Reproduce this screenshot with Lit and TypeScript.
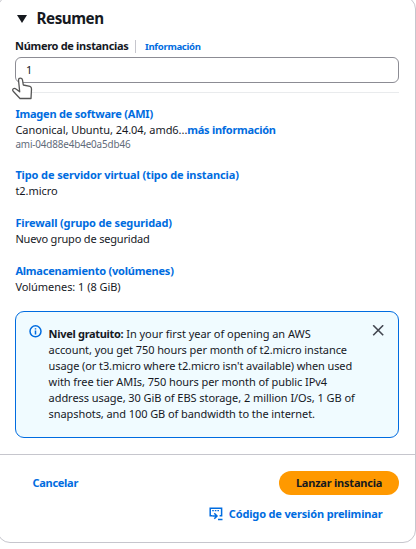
import { LitElement, html, css } from "lit";
import { customElement } from "lit/decorators.js";

@customElement("app-root")
export class AppRoot extends LitElement {
  static styles = css`
    :host {
      display: block;
      position: relative;
      height: 549px;
      overflow: hidden;
      background: #fff;
      font: 11px/16px "Noto Sans", "Open Sans", sans-serif;
      letter-spacing: -0.05px;
      color: #16191f;
    }
    * { box-sizing: border-box; }
    .card {
      margin: -4px 0 0 -3px;
      height: 547px;
      border: 1px solid #c6c6cd;
      border-radius: 13px;
      display: flex;
      flex-direction: column;
    }
    .body { height: 457px; padding: 11px 16px 0 17px; flex: none; }
    .title { display: flex; align-items: center; height: 22px; gap: 9.5px; padding-left: 2px; font-size: 15.2px; line-height: 20px; font-weight: 700; letter-spacing: -0.45px; }
    .title svg { display: block; }
    .title span { padding-bottom: 2px; }
    b, .link, .button { font-size: 11px; font-weight: 700; }
    .label { display: flex; align-items: center; height: 16px; margin-top: 8px; white-space: nowrap; }
    .label b { letter-spacing: -0.31px; }
    .label .info { border-left: 1px solid #c6c6cd; margin-left: 6.5px; padding-left: 9px; height: 13px; line-height: 13px; font-size: 9.6px; letter-spacing: -0.32px; }
    .input { height: 26px; margin-top: 3px; border: 1px solid #8c8c94; border-radius: 6px; padding: 0 10px; line-height: 24px; }
    .rule { height: 1px; background: #e9ebed; margin: 9px 0 13px; }
    .link { color: #006ce0; }
    .item { margin-bottom: 16px; padding-left: 0.4px; white-space: nowrap; }
    .item div { height: 16px; }
    .item .small { font-size: 9.9px; color: #5f6b7a; height: 13px; line-height: 12px; letter-spacing: -0.14px; }
    .image .link { letter-spacing: -0.22px; }
    .image .more { letter-spacing: -0.27px; }
    .type .link { letter-spacing: -0.12px; }
    .firewall .link { letter-spacing: -0.13px; }
    .firewall .value { letter-spacing: -0.18px; }
    .storage .link { letter-spacing: -0.22px; }
    .alert {
      height: 127px;
      border: 1px solid #006ce0;
      border-radius: 9px;
      background: #f0fbff;
      display: flex;
      padding: 13px 13px 0;
    }
    .alert .copy { flex: 1; padding: 1px 0 0 6.6px; white-space: nowrap; letter-spacing: -0.08px; }
    .alert b { letter-spacing: -0.32px; }
    .alert svg { flex: none; }
    .copy div { height: 16px; }
    .copy .opening { word-spacing: 0.15px; }
    .copy .usage { letter-spacing: -0.1px; }
    .copy .address { letter-spacing: -0.06px; }
    .footer { flex: 1; border-top: 1px solid #c6c6cd; padding: 16px 16px 0 34.4px; }
    .actions { display: flex; justify-content: space-between; align-items: center; height: 24px; }
    .actions .link { letter-spacing: -0.27px; }
    .button { width: 120px; height: 24px; border-radius: 12px; background: #ff9900; text-align: center; line-height: 24px; letter-spacing: -0.22px; }
    .preview { display: flex; justify-content: flex-end; align-items: center; gap: 6px; margin: 11px 16.5px 0 0; height: 16px; white-space: nowrap; letter-spacing: -0.16px; }
    .cursor { position: absolute; left: 11px; top: 77px; }
  `;

  render() {
    return html`
      <section class="card">
        <div class="body">
          <div class="title">
            <svg width="10" height="8" viewBox="0 0 10 8"><path d="M0 0H10L5 8Z" fill="#16191f" /></svg>
            <span>Resumen</span>
          </div>
          <div class="label"><b>Número de instancias</b><span class="info link">Información</span></div>
          <div class="input">1</div>
          <div class="rule"></div>
          <div class="item image">
            <div class="link">Imagen de software (AMI)</div>
            <div><span>Canonical, Ubuntu, 24.04, amd6...</span><span class="link more">más información</span></div>
            <div class="small">ami-04d88e4b4e0a5db46</div>
          </div>
          <div class="item type">
            <div class="link">Tipo de servidor virtual (tipo de instancia)</div>
            <div class="value">t2.micro</div>
          </div>
          <div class="item firewall">
            <div class="link">Firewall (grupo de seguridad)</div>
            <div class="value">Nuevo grupo de seguridad</div>
          </div>
          <div class="item storage">
            <div class="link">Almacenamiento (volúmenes)</div>
            <div class="value">Volúmenes: 1 (8 GiB)</div>
          </div>
          <div class="alert">
            <svg width="13" height="13" viewBox="0 0 13 13" fill="none" stroke="#006ce0" stroke-width="1.5">
              <circle cx="6.5" cy="6.3" r="5.5" /><path d="M6.5 5.6V9.4M6.5 3.2V4.6" />
            </svg>
            <div class="copy">
              <div class="opening"><b>Nivel gratuito:</b> In your first year of opening an AWS</div>
              <div>account, you get 750 hours per month of t2.micro instance</div>
              <div class="usage">usage (or t3.micro where t2.micro isn't available) when used</div>
              <div>with free tier AMIs, 750 hours per month of public IPv4</div>
              <div class="address">address usage, 30 GiB of EBS storage, 2 million I/Os, 1 GB of</div>
              <div>snapshots, and 100 GB of bandwidth to the internet.</div>
            </div>
            <svg width="13" height="12" viewBox="0 0 13 12" fill="none" stroke="#424650" stroke-width="1.6">
              <path d="M1.2 .3L11.2 10.3M11.2 .3L1.2 10.3" />
            </svg>
          </div>
        </div>
        <div class="footer">
          <div class="actions">
            <span class="link">Cancelar</span>
            <span class="button">Lanzar instancia</span>
          </div>
          <div class="preview link">
            <svg width="14" height="14" viewBox="0 0 14 14" fill="none" stroke="#006ce0" stroke-width="1.5">
              <path d="M3.6 8.8H1.2V1.2H12.6V8.8H10.6" /><path d="M3.2 3.6H10.8" stroke-width="1.2" stroke-dasharray="1.6 1" />
              <path d="M3.5 9H7.5M5.3 6.2L8 9L5.3 11.8" /><path d="M9 12.5H13.5" />
            </svg>
            <span>Código de versión preliminar</span>
          </div>
        </div>
      </section>
      <svg class="cursor" width="23" height="24" viewBox="0 0 23 24">
        <path d="M7.5 3C7.5.6 11 .6 11.5 3L12.3 8L19 9.3Q20.6 9.8 20.5 12L20 21.5H9L2.2 14.2C.5 12 3.3 10.5 5 12L8.7 14.8Z" fill="#fff" stroke="#555" stroke-width="1.3" stroke-linejoin="round" />
      </svg>
    `;
  }
}
